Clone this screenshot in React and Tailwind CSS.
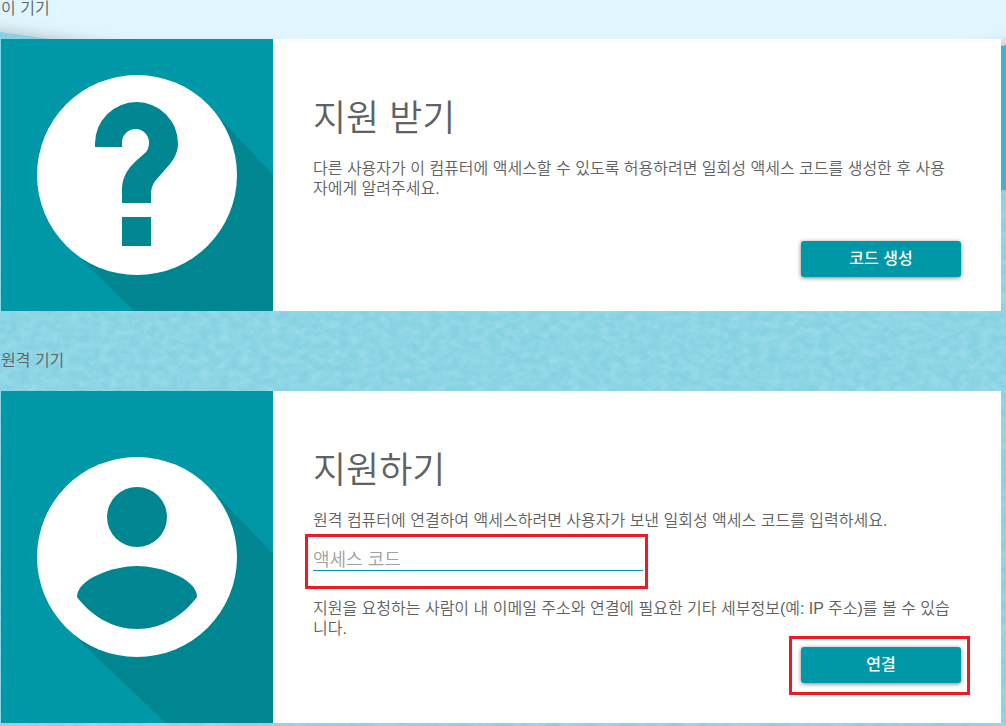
import { useState } from "react";

function Backdrop() {
  return (
    <svg
      className="absolute inset-0 -z-10 w-full h-full"
      viewBox="0 0 1006 726"
      preserveAspectRatio="none"
      aria-hidden="true"
    >
      <defs>
        <filter id="paper" x="0" y="0" width="100%" height="100%">
          <feTurbulence type="fractalNoise" baseFrequency="0.1 0.14" numOctaves="5" seed="7" />
          <feColorMatrix values="0 0 0 0 0.36  0 0 0 0 0.74  0 0 0 0 0.85  0 1.3 0 0 -0.4" />
          <feComposite in2="SourceGraphic" operator="in" />
        </filter>
        <filter id="edge" x="-5%" y="-5%" width="110%" height="110%">
          <feDropShadow dx="0" dy="-2" stdDeviation="7" floodColor="#666" floodOpacity="0.35" />
        </filter>
      </defs>
      <rect width="1006" height="726" fill="#e1f5fe" />
      <g filter="url(#edge)">
        <path d="M-30 28L0 32L50 39L400 90L800 90L1001 46L1036 42V760H-30Z" fill="#86d2e2" />
        <path d="M800 90L1001 46L1036 42V190H800Z" fill="#3cb4ce" />
      </g>
      <rect y="192" width="1006" height="534" fill="#fff" filter="url(#paper)" />
    </svg>
  );
}

function HelpArt() {
  return (
    <svg className="w-full h-full" viewBox="0 0 272 272" preserveAspectRatio="xMidYMid slice" aria-hidden="true">
      <path d="M216 76L272 136V272H133L70 210Z" fill="#008691" />
      <circle cx="136" cy="136" r="100" fill="#fff" />
      <path
        d="M94 108V104.500A41.500 41.500 0 0 1 177 104.500C177 112 174 119 169 125L155 141C151 146 150 150 150 157V164H121V151C121 139 126 130 135.500 121.500L144.500 113.500C147 111 148 107 148 103.500A13.500 13.500 0 0 0 121 103.500V108ZM121 178H150V207H121Z"
        fill="#008691"
      />
    </svg>
  );
}

function PersonArt() {
  return (
    <svg className="w-full h-full" viewBox="0 0 272 332" preserveAspectRatio="xMidYMid slice" aria-hidden="true">
      <path d="M216 104L272 163V332H165L70 242Z" fill="#008691" />
      <circle cx="136" cy="166" r="100" fill="#fff" />
      <circle cx="136" cy="126" r="30" fill="#008691" />
      <path d="M76 206C76 187 114 175 136 175S196 187 196 206C182 225 160 238 136 238S90 225 76 206Z" fill="#008691" />
    </svg>
  );
}

function Card({ art, title, children }) {
  return (
    <section className="flex bg-white">
      <div className="w-68 shrink-0 bg-[#0097a7]">{art}</div>
      <div className="flex-1 min-w-0 flex flex-col px-10 pt-14">
        <h2 className="pt-0.5 text-4xl leading-11 font-[350]">{title}</h2>
        {children}
      </div>
    </section>
  );
}

function ActionButton({ children }) {
  return (
    <button className="w-40 h-9 rounded-[3px] bg-[#0097a7] text-white font-medium shadow-[0_1px_4px_rgba(0,0,0,0.5)] hover:bg-[#00838f]">
      {children}
    </button>
  );
}

export default function App() {
  const [code, setCode] = useState("");

  return (
    <main
      lang="ko"
      className="relative isolate min-h-screen overflow-hidden pl-px pr-[5px] pb-[3px] text-base leading-5 font-[350] text-[#616161] font-['Liberation_Sans','Noto_Sans_CJK_KR',sans-serif]"
    >
      <Backdrop />

      <p className="h-10 -mt-px">이 기기</p>
      <Card art={<HelpArt />} title="지원 받기">
        <p className="mt-[18px] pr-2">
          다른 사용자가 이 컴퓨터에 액세스할 수 있도록 허용하려면 일회성 액세스 코드를 생성한 후 사용자에게 알려주세요.
        </p>
        <div className="mt-[42px] mb-[34px] self-end">
          <ActionButton>코드 생성</ActionButton>
        </div>
      </Card>

      <p className="pt-10 pb-5">원격 기기</p>
      <Card art={<PersonArt />} title="지원하기">
        <p className="mt-[18px] pr-2">
          원격 컴퓨터에 연결하여 액세스하려면 사용자가 보낸 일회성 액세스 코드를 입력하세요.
        </p>
        <div className="relative mt-3 w-[330px]">
          <input
            type="text"
            aria-label="액세스 코드"
            placeholder="액세스 코드"
            value={code}
            onChange={(e) => setCode(e.target.value)}
            className="block w-full h-7 pt-2 border-b border-[#0097a7] text-lg leading-5 outline-none placeholder:text-[#a0a0a0]"
          />
          <span className="absolute -left-2 -right-[5px] -top-[9px] -bottom-[18px] border-3 border-[#ed1c24] pointer-events-none" />
        </div>
        <p className="mt-7 pr-2">
          지원을 요청하는 사람이 내 이메일 주소와 연결에 필요한 기타 세부정보(예: IP 주소)를 볼 수 있습니다.
        </p>
        <div className="relative mt-2 mb-10 self-end">
          <ActionButton>연결</ActionButton>
          <span className="absolute -left-3 -right-[9px] -top-[11px] -bottom-3 border-3 border-[#ed1c24] pointer-events-none" />
        </div>
      </Card>
    </main>
  );
}
